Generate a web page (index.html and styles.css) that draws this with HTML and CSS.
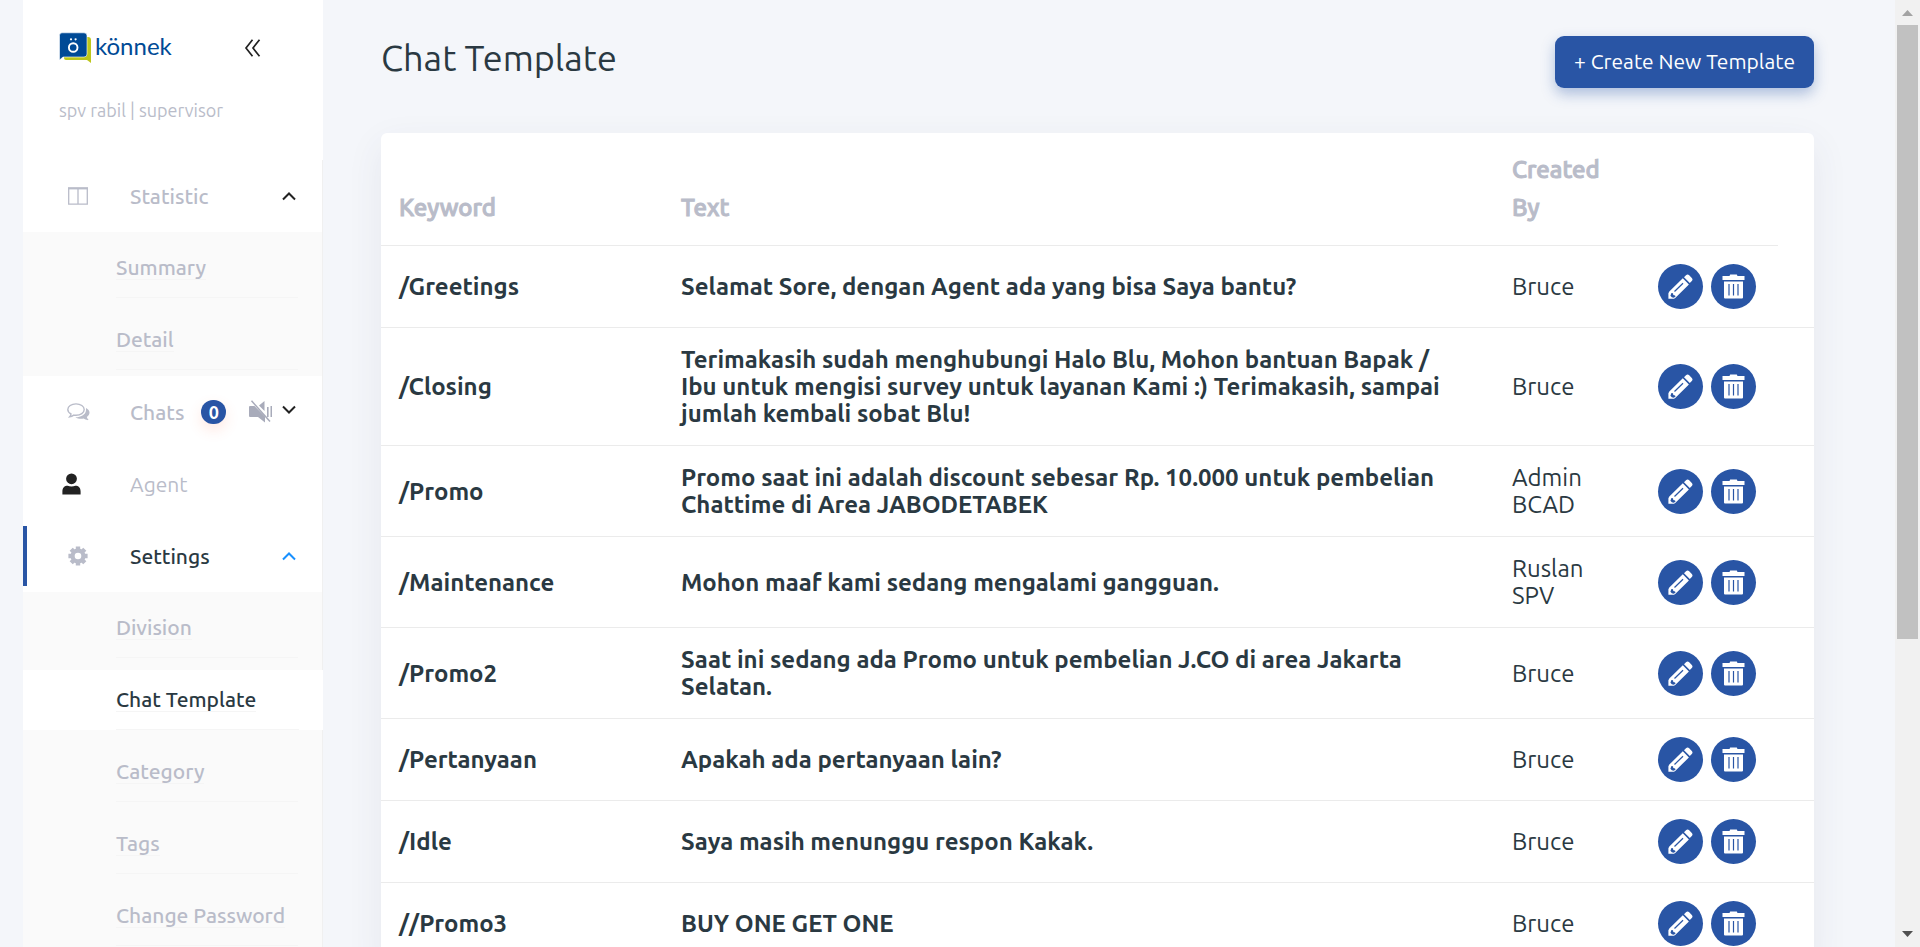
FILE: index.html
```html
<!DOCTYPE html>
<html lang="en">
<head>
<meta charset="utf-8">
<title>Chat Template</title>
<link rel="stylesheet" href="styles.css">
</head>
<body>
<svg class="sprite" aria-hidden="true">
  <symbol id="pencil" viewBox="0 0 25 25">
    <path fill="#fff" d="M18 1.300q1.600-1.500 3.200 0l2.600 2.700q1.400 1.500 0 3.100l-2 2-5.800-5.800zM14.800 4.300l6.100 6.100L7.200 24 6 24.700H.4v-5.500l.9-1.600z"/>
    <path fill="none" stroke="#2955a5" stroke-width="1.200" d="M6.500 17.500 15 9.200"/>
    <path fill="#2955a5" d="M3.400 19l1.600.2.300 1.900 1.800.3.400 1.300-1.900 1-1.800-.4-1.400-1.600z"/>
  </symbol>
  <symbol id="trash" viewBox="0 0 25 25">
    <path fill="#fff" d="M1.500 2h7l.7-1.500h6.600l.7 1.500h7v4h-22zM3 7.500h19V23.500q0 1-1 1H4q-1 0-1-1z"/>
    <path stroke="#2955a5" stroke-width="1.200" d="M8 10v11.500M12.500 10v11.500M17 10v11.500"/>
  </symbol>
  <symbol id="up" viewBox="0 0 14 10"><path fill="none" stroke="currentColor" stroke-width="2" d="M1 8.500 7 2.500l6 6"/></symbol>
  <symbol id="down" viewBox="0 0 14 10"><path fill="none" stroke="currentColor" stroke-width="2" d="M1 1.500 7 7.500l6-6"/></symbol>
</svg>
<div class="shell">
  <aside class="sidebar">
    <header class="brand">
      <div class="brand-row">
        <a class="logo" href="#" aria-label="könnek">
          <svg class="logo-mark" viewBox="0 0 32 32" aria-hidden="true">
            <path fill="#bdc61c" d="M5 5h24q3 0 3 3v23l-4-3H7q-2 0-2-2z"/>
            <path fill="#004a96" stroke="#fff" stroke-width=".6" d="M3 .8h22q3 0 3 3V22q0 3-3 3H4l-3.500 3V3.500Q.5.800 3 .800z"/>
            <circle cx="14.200" cy="15.500" r="4.300" fill="none" stroke="#fff" stroke-width="1.900"/>
            <circle cx="12" cy="7.300" r="1.100" fill="#fff"/><circle cx="16.600" cy="7.300" r="1.100" fill="#fff"/>
          </svg>
          <span class="logo-text">könnek</span>
        </a>
        <button class="collapse" aria-label="Collapse menu">
          <svg width="18" height="18" viewBox="0 0 18 18"><path fill="none" stroke="#222" stroke-width="1.700" d="M8.500.8 2 9l6.500 8.200M15.500.8 9 9l6.500 8.200"/></svg>
        </button>
      </div>
      <p class="user">spv rabil | supervisor</p>
    </header>
    <nav class="nav">
      <a class="item" href="#">
        <span class="icon"><svg width="20" height="18" viewBox="0 0 20 18"><path fill="none" stroke="#b9bcc9" stroke-width="1.300" d="M.7 1.500h18.600v15.700H.7zM10 2v15"/><path stroke="#b9bcc9" stroke-width="2" d="M0 1.200h20"/></svg></span>
        <span class="label">Statistic</span>
        <svg class="arrow" aria-hidden="true"><use href="#up"/></svg>
      </a>
      <div class="sub">
        <div class="subitem"><a href="#">Summary</a></div>
        <div class="subitem"><a href="#">Detail</a></div>
      </div>
      <div class="item">
        <span class="icon icon-wide"><svg width="23" height="18" viewBox="0 0 23 18"><g fill="none" stroke="#b9bcc9" stroke-width="1.400"><path d="M9 .9c4.600 0 8.200 2.500 8.200 5.700s-3.600 5.700-8.200 5.700c-.8 0-1.600-.1-2.300-.2-1.100.8-2.500 1.400-4 1.600.7-.8 1.200-1.500 1.300-2.700C2 10 .8 8.400.8 6.600.8 3.400 4.400.9 9 .9z"/></g><path fill="#b9bcc9" d="M19 5c2.200 1.100 3.500 2.700 3.500 4.600 0 1.800-1 3.300-2.700 4.400.3 1 .8 1.900 1.700 2.700-.2.300-.5.500-.9.400-1.500-.2-2.900-.8-4-1.500-3.100.6-6.100 0-8.200-1.300C13 14.500 18.500 12 19 7.500z"/></svg></span>
        <a class="label" href="#">Chats</a>
        <span class="badge">0</span>
        <button class="mute" aria-label="Mute chats"><svg width="24" height="24" viewBox="0 0 24 24"><path fill="#a8abba" d="M0 7q0-1 1-1h4.500L16 16.500V22.500L9 17H1q-1 0-1-1zM10 5.500l5.500-4.500V11zM18 7h1.600v10H18zM21.500 6h1.500v11h-1.500z"/><path stroke="#a8abba" stroke-width="1.500" d="M2.500.8 21 21.500"/></svg></button>
        <svg class="arrow arrow-raised" aria-hidden="true"><use href="#down"/></svg>
      </div>
      <a class="item" href="#">
        <span class="icon icon-user"><svg width="19" height="22" viewBox="0 0 19 22"><circle cx="9.500" cy="5.800" r="5.400" fill="#222"/><path fill="#222" d="M.4 21.500v-3c0-4 2-5.800 5.300-5.800 2 1 5.600 1 7.600 0 3.300 0 5.300 1.800 5.300 5.800v3z"/></svg></span>
        <span class="label label-light">Agent</span>
      </a>
      <a class="item item-active" href="#">
        <span class="icon"><svg width="20" height="20" viewBox="0 0 20 20"><circle cx="10" cy="10" r="5.400" fill="none" stroke="#b9bcc9" stroke-width="4.200"/><path stroke="#b9bcc9" stroke-width="4.400" d="M10 .4v4M10 15.600v4M.4 10h4M15.600 10h4M3.200 3.200l2.600 2.600M14.200 14.200l2.600 2.600M3.200 16.800l2.600-2.600M14.200 5.800l2.600-2.600"/></svg></span>
        <span class="label">Settings</span>
        <svg class="arrow arrow-blue" aria-hidden="true"><use href="#up"/></svg>
      </a>
      <div class="sub">
        <div class="subitem"><a href="#">Division</a></div>
        <div class="subitem subitem-active"><a href="#">Chat Template</a></div>
        <div class="subitem"><a href="#">Category</a></div>
        <div class="subitem"><a href="#">Tags</a></div>
        <div class="subitem"><a href="#">Change Password</a></div>
      </div>
    </nav>
  </aside>
  <main class="main">
    <header class="top">
      <h1>Chat Template</h1>
      <button class="create">+ Create New Template</button>
    </header>
    <section class="card">
      <table class="table">
        <colgroup><col class="c-key"><col><col class="c-by"><col class="c-act"><col class="c-end"></colgroup>
        <thead><tr><th>Keyword</th><th>Text</th><th>Created By</th><th></th></tr></thead>
        <tbody>
          <tr><td class="strong">/Greetings</td><td class="strong">Selamat Sore, dengan Agent ada yang bisa Saya bantu?</td><td>Bruce</td><td class="acts"><div class="pair"><button class="round" aria-label="Edit"><svg><use href="#pencil"/></svg></button><button class="round" aria-label="Delete"><svg><use href="#trash"/></svg></button></div></td><td></td></tr>
          <tr><td class="strong">/Closing</td><td class="strong">Terimakasih sudah menghubungi Halo Blu, Mohon bantuan Bapak /<br>Ibu untuk mengisi survey untuk layanan Kami :) Terimakasih, sampai<br>jumlah kembali sobat Blu!</td><td>Bruce</td><td class="acts"><div class="pair"><button class="round" aria-label="Edit"><svg><use href="#pencil"/></svg></button><button class="round" aria-label="Delete"><svg><use href="#trash"/></svg></button></div></td><td></td></tr>
          <tr><td class="strong">/Promo</td><td class="strong">Promo saat ini adalah discount sebesar Rp. 10.000 untuk pembelian<br>Chattime di Area JABODETABEK</td><td>Admin<br>BCAD</td><td class="acts"><div class="pair"><button class="round" aria-label="Edit"><svg><use href="#pencil"/></svg></button><button class="round" aria-label="Delete"><svg><use href="#trash"/></svg></button></div></td><td></td></tr>
          <tr><td class="strong">/Maintenance</td><td class="strong">Mohon maaf kami sedang mengalami gangguan.</td><td>Ruslan<br>SPV</td><td class="acts"><div class="pair"><button class="round" aria-label="Edit"><svg><use href="#pencil"/></svg></button><button class="round" aria-label="Delete"><svg><use href="#trash"/></svg></button></div></td><td></td></tr>
          <tr><td class="strong">/Promo2</td><td class="strong">Saat ini sedang ada Promo untuk pembelian J.CO di area Jakarta<br>Selatan.</td><td>Bruce</td><td class="acts"><div class="pair"><button class="round" aria-label="Edit"><svg><use href="#pencil"/></svg></button><button class="round" aria-label="Delete"><svg><use href="#trash"/></svg></button></div></td><td></td></tr>
          <tr><td class="strong">/Pertanyaan</td><td class="strong">Apakah ada pertanyaan lain?</td><td>Bruce</td><td class="acts"><div class="pair"><button class="round" aria-label="Edit"><svg><use href="#pencil"/></svg></button><button class="round" aria-label="Delete"><svg><use href="#trash"/></svg></button></div></td><td></td></tr>
          <tr><td class="strong">/Idle</td><td class="strong">Saya masih menunggu respon Kakak.</td><td>Bruce</td><td class="acts"><div class="pair"><button class="round" aria-label="Edit"><svg><use href="#pencil"/></svg></button><button class="round" aria-label="Delete"><svg><use href="#trash"/></svg></button></div></td><td></td></tr>
          <tr><td class="strong">//Promo3</td><td class="strong">BUY ONE GET ONE</td><td>Bruce</td><td class="acts"><div class="pair"><button class="round" aria-label="Edit"><svg><use href="#pencil"/></svg></button><button class="round" aria-label="Delete"><svg><use href="#trash"/></svg></button></div></td><td></td></tr>
        </tbody>
      </table>
    </section>
  </main>
  <div class="scrollbar" aria-hidden="true">
    <svg class="cap" viewBox="0 0 25 25"><path fill="#a3a3a3" d="M7 16l5.500-6 5.500 6z"/></svg>
    <div class="track"><div class="thumb"></div></div>
    <svg class="cap" viewBox="0 0 25 25"><path fill="#505050" d="M7 9l5.500 6 5.500-6z"/></svg>
  </div>
</div>
</body>
</html>
```
FILE: styles.css
```css
* { box-sizing: border-box; }
body { margin: 0; background: #f4f6fa; color: #2a3942; font-family: Ubuntu, "Noto Sans", sans-serif; }
a { color: inherit; text-decoration: none; }
button { border: 0; padding: 0; background: none; font: inherit; cursor: pointer; }
.sprite { display: none; }
.shell { display: flex; height: 100vh; overflow: hidden; padding-left: 23px; }

.sidebar { width: 300px; flex: none; background: #fff; }
.brand { height: 160px; padding: 31px 40px 0 36px; }
.brand-row { display: flex; align-items: center; justify-content: space-between; height: 34px; padding-right: 21px; }
.logo { display: flex; align-items: center; gap: 4px; }
.logo-mark { width: 32px; height: 32px; }
.logo-text { font-family: Lato, sans-serif; font-size: 24px; line-height: 28px; padding-bottom: 4px; color: #004a96; }
.collapse { display: flex; }
.user { margin: 33px 0 0; font-size: 18px; line-height: 24px; color: #b9bcc9; }

.nav { padding-top: 6px; border-right: 1px solid #f0f0f0; font-size: 21px; color: #b9bcc9; }
.item { display: flex; align-items: center; height: 60px; margin-bottom: 6px; padding: 0 26px 0 45px; border-left: 0 solid #2955a5; }
.sub + .item { margin-top: 6px; }
.item + .item { margin-top: 12px; }
.icon { display: flex; width: 62px; flex: none; }
.icon-wide { margin-left: -1px; width: 63px; }
.icon-user { margin-left: -6px; width: 68px; }
.label { font-weight: 500; }
.label-light { font-weight: 400; }
.arrow { width: 14px; height: 10px; margin-left: auto; color: #222; flex: none; }
.arrow-raised { margin-bottom: 4px; }
.arrow-blue { color: #1890ff; }
.item-active { border-left-width: 4px; padding-left: 41px; color: #2a3942; }
.badge { width: 25px; height: 24px; margin-left: 17px; border-radius: 12px; background: #2955a5; color: #fff; font-size: 18px; font-weight: 700; line-height: 25px; text-align: center; box-shadow: 0 6px 14px rgba(255, 100, 60, .15); }
.mute { display: flex; margin-left: auto; }
.mute + .arrow { margin-left: 9px; }
.sub { display: flow-root; background: #fafafa; }
.subitem { display: flex; align-items: center; height: 60px; margin: 12px 0; padding: 0 24px 0 93px; background: linear-gradient(#f5f5f5, #f5f5f5) right 24px bottom / calc(100% - 117px) 1px no-repeat; }
.subitem:first-child { margin-top: 6px; }
.subitem:last-child { margin-bottom: 6px; }
.subitem a { border-bottom: 1px solid #f5f5f5; line-height: 23px; font-weight: 500; }
.subitem-active { margin-right: -1px; background-color: #fff; color: #2a3942; }

.main { flex: 1; min-width: 0; padding: 36px 81px 0 58px; }
.top { display: flex; align-items: flex-start; justify-content: space-between; height: 97px; }
h1 { margin: 0; font-size: 36px; font-weight: 400; line-height: 44px; }
.create { height: 52px; padding: 0 19px 2px; border-radius: 9px; background: #2955a5; color: #fff; font-size: 21px; font-weight: 400; box-shadow: 0 6px 14px rgba(41, 85, 165, .35); }
.card { background: #fff; border-radius: 6px; box-shadow: 0 12px 36px rgba(60, 60, 100, .08); }
.table { width: 100%; table-layout: fixed; border-collapse: separate; border-spacing: 0; font-size: 24px; line-height: 27px; }
.c-key { width: 282px; }
.c-by { width: 146px; }
.c-act { width: 138px; }
.c-end { width: 36px; }
th, td { padding: 18px; text-align: left; border-bottom: 1px solid #ebebeb; }
td:last-child { padding: 0; }
th { line-height: 38px; font-weight: 500; -webkit-text-stroke: 1px #b9bcc9; color: #b9bcc9; vertical-align: bottom; }
.strong { font-weight: 700; white-space: nowrap; }
.table .acts { padding-right: 0; }
.pair { display: flex; gap: 8px; }
.round { display: grid; place-items: center; width: 45px; height: 45px; border-radius: 50%; background: #2955a5; }
.round svg { width: 25px; height: 25px; }

.scrollbar { display: flex; flex-direction: column; width: 25px; flex: none; background: #f1f1f1; }
.cap { width: 25px; height: 25px; }
.track { flex: 1; padding: 0 2px; }
.thumb { height: 68.5%; background: #c1c1c1; }
```
